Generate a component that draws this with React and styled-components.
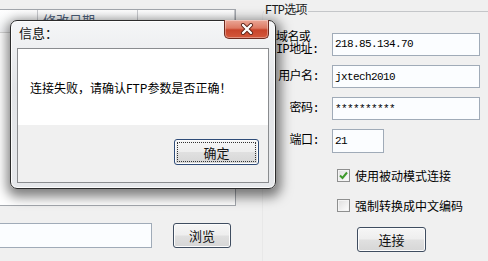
import React from 'react';
import styled, { createGlobalStyle } from 'styled-components';

const GlobalStyle = createGlobalStyle`
  html, body {
    margin: 0;
    padding: 0;
    width: 488px;
    height: 261px;
    overflow: hidden;
    background: #f0f0f0;
    font-family: "Noto Sans CJK SC", "Liberation Sans", sans-serif;
    font-size: 12px;
    color: #000;
  }
`;

const Window = styled.div`
  position: relative;
  display: flex;
  width: 488px;
  height: 261px;
  overflow: hidden;
`;

const LeftPane = styled.div`
  width: 262px;
  flex: 0 0 262px;
  display: flex;
  flex-direction: column;
`;

const ListView = styled.div`
  box-sizing: border-box;
  margin: 9px 0 0 -2px;
  width: 238px;
  height: 197px;
  border: 1px solid #a3a7ad;
  background: #fff;
`;

const ListHeader = styled.div`
  display: flex;
  height: 22px;
  background: linear-gradient(#ffffff, #f4f5f7);
  border-bottom: 1px solid #d5d5d5;
`;

const HeaderCell = styled.div`
  box-sizing: border-box;
  width: ${p => (p.$width ? `${p.$width}px` : 'auto')};
  flex: ${p => (p.$width ? '0 0 auto' : '1')};
  border-right: 1px solid #c9cbcf;
  padding: 1px 0 0 5px;
  line-height: 18px;
  color: #4c607a;
  font-size: 13px;
`;

const FileRow = styled.div`
  display: flex;
  align-items: center;
  gap: 21px;
  margin: 17px 0 0 -2px;
`;

const TextBox = styled.div`
  box-sizing: border-box;
  width: ${p => p.$width}px;
  height: ${p => p.$height || 23}px;
  border: 1px solid #a0abb8;
  background: #fbfdff;
  padding: 0 2px;
  display: flex;
  align-items: center;
  font-family: "Liberation Mono", "Noto Sans CJK SC", monospace;
  font-size: 11px;
  letter-spacing: -0.6px;
  color: #000;
`;

const Button = styled.div`
  position: relative;
  box-sizing: border-box;
  width: ${p => p.$width}px;
  height: ${p => p.$height || 25}px;
  border: 1px solid ${p => (p.$default ? '#2f4c78' : '#3f4d60')};
  border-radius: 3px;
  background: linear-gradient(#f6f6f6 0%, #eeeeee 48%, #e0e0e0 52%, #d6d6d6 100%);
  box-shadow: inset 0 0 0 1px #fcfcfc;
  display: flex;
  align-items: center;
  justify-content: center;
  font-size: 13px;
  color: #111;
  &::after {
    content: '';
    display: ${p => (p.$default ? 'block' : 'none')};
    position: absolute;
    inset: 2px;
    border: 1px dotted #333;
    border-radius: 1px;
  }
`;

const GroupBox = styled.fieldset`
  flex: 1;
  min-width: 0;
  margin: 4px -10px -10px 0;
  padding: 0;
  border: 1px solid #c4c6c9;
  border-left-color: #e8e8e8;
  border-radius: 4px;
`;

const Legend = styled.legend`
  margin-left: 1px;
  padding: 0 1px;
  line-height: 14px;
  font-family: "Liberation Mono", "Noto Sans CJK SC", monospace;
  font-size: 12px;
  letter-spacing: -0.8px;
  color: #1a1a1a;
`;

const FormGrid = styled.div`
  display: grid;
  grid-template-columns: 43px 148px;
  column-gap: 13px;
  row-gap: 9px;
  align-items: center;
  padding: 14px 0 0 13px;
`;

const Label = styled.div`
  justify-self: ${p => (p.$left ? 'start' : 'end')};
  font-family: "Liberation Mono", "Noto Sans CJK SC", monospace;
  font-size: 12px;
  line-height: 12px;
  letter-spacing: -0.6px;
  white-space: pre;
`;

const Options = styled.div`
  display: flex;
  flex-direction: column;
  align-items: flex-start;
  gap: 14px;
  margin: 14px 0 0 74px;
`;

const CheckRow = styled.div`
  display: flex;
  align-items: center;
  gap: 5px;
  height: 16px;
  font-size: 12px;
`;

const Box = styled.div`
  box-sizing: border-box;
  width: 13px;
  height: 13px;
  border: 1px solid #8e8f8f;
  background: linear-gradient(135deg, #dedede, #ffffff);
  box-shadow: inset 0 0 0 1px #f4f4f4;
  display: flex;
  align-items: center;
  justify-content: center;
`;

const ConnectWrap = styled.div`
  margin-left: 20px;
`;

const Dialog = styled.div`
  position: absolute;
  left: 10px;
  top: 20px;
  box-sizing: border-box;
  width: 266px;
  height: 169px;
  border: 1px solid #2b2b2b;
  border-radius: 7px;
  background: linear-gradient(#f5f6f7, #e3e5e8 40%, #e6e8eb);
  box-shadow: inset 0 0 0 1px rgba(255, 255, 255, 0.85), 1px 4px 12px 4px rgba(0, 0, 0, 0.5);
  display: flex;
  flex-direction: column;
`;

const TitleBar = styled.div`
  height: 27px;
  box-sizing: border-box;
  padding: 4px 0 0 8px;
  line-height: 16px;
  font-size: 13px;
  color: #111;
`;

const CloseButton = styled.div`
  position: absolute;
  top: -1px;
  right: 6px;
  box-sizing: border-box;
  width: 45px;
  height: 19px;
  border: 1px solid #6e2a1f;
  border-top: none;
  border-radius: 0 0 5px 5px;
  background: linear-gradient(#eba797 0%, #dd7a63 45%, #c8442b 55%, #d4583c 100%);
  box-shadow: inset 0 0 0 1px rgba(255, 255, 255, 0.35);
  display: flex;
  align-items: center;
  justify-content: center;
`;

const ClientArea = styled.div`
  flex: 1;
  margin: 0 6px 5px 6px;
  border: 1px solid #8a8c8f;
  display: flex;
  flex-direction: column;
  background: #f0f0f0;
`;

const Message = styled.div`
  height: 76px;
  background: #fff;
  display: flex;
  align-items: center;
  padding-left: 12px;
  font-size: 12px;
  color: #000;
`;

const DialogFooter = styled.div`
  flex: 1;
  display: flex;
  justify-content: flex-end;
  align-items: flex-start;
  padding: 14px 9px 0 0;
`;

const CheckMark = () => (
  <svg width="9" height="9" viewBox="0 0 9 9">
    <path d="M1 4.5 L3.5 7 L8 1.5" fill="none" stroke="#3f9a2c" strokeWidth="2" />
  </svg>
);

const CloseX = () => (
  <svg width="14" height="12" viewBox="0 0 14 12">
    <path d="M3 2 L11 10 M11 2 L3 10" stroke="#5a2015" strokeWidth="4" strokeLinecap="round" />
    <path d="M3 2 L11 10 M11 2 L3 10" stroke="#ffffff" strokeWidth="2.4" strokeLinecap="round" />
  </svg>
);

export default function App() {
  return (
    <Window>
      <GlobalStyle />
      <LeftPane>
        <ListView>
          <ListHeader>
            <HeaderCell $width={39} />
            <HeaderCell $width={100}>修改日期</HeaderCell>
            <HeaderCell />
          </ListHeader>
        </ListView>
        <FileRow>
          <TextBox $width={154} $height={25} />
          <Button $width={58} $height={25}>浏览</Button>
        </FileRow>
      </LeftPane>

      <GroupBox>
        <Legend>FTP选项</Legend>
        <FormGrid>
          <Label $left>{'域名或\nIP地址:'}</Label>
          <TextBox $width={148}>218.85.134.70</TextBox>
          <Label>用户名:</Label>
          <TextBox $width={148}>jxtech2010</TextBox>
          <Label>密码:</Label>
          <TextBox $width={148}>**********</TextBox>
          <Label>端口:</Label>
          <TextBox $width={52} $height={24}>21</TextBox>
        </FormGrid>
        <Options>
          <CheckRow>
            <Box><CheckMark /></Box>
            使用被动模式连接
          </CheckRow>
          <CheckRow>
            <Box />
            强制转换成中文编码
          </CheckRow>
          <ConnectWrap>
            <Button $width={69} $height={25}>连接</Button>
          </ConnectWrap>
        </Options>
      </GroupBox>

      <Dialog>
        <TitleBar>信息：</TitleBar>
        <CloseButton><CloseX /></CloseButton>
        <ClientArea>
          <Message>连接失败，请确认FTP参数是否正确！</Message>
          <DialogFooter>
            <Button $width={85} $height={26} $default>确定</Button>
          </DialogFooter>
        </ClientArea>
      </Dialog>
    </Window>
  );
}
